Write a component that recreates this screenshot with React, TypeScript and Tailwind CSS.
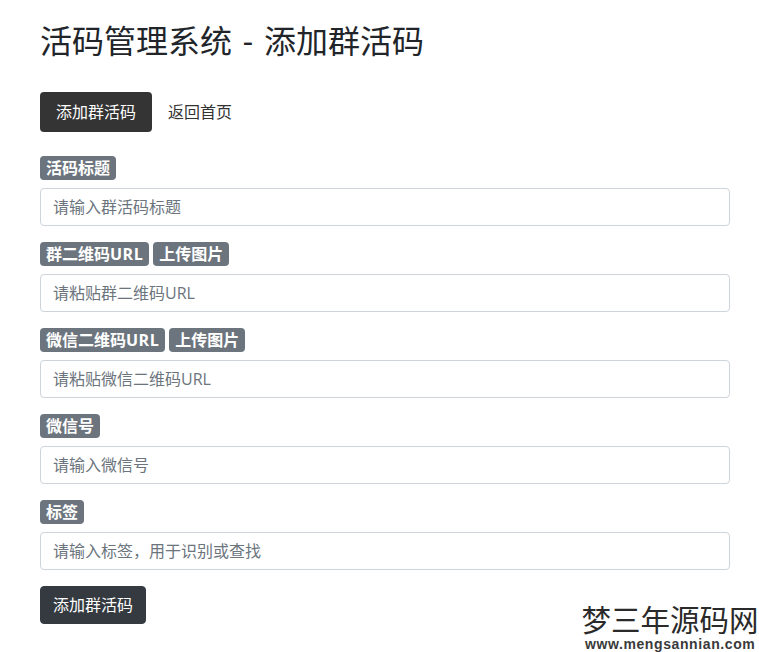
import React from 'react';

const fontStack = "font-['Open_Sans','Noto_Sans_CJK_SC',sans-serif]";

const Badge: React.FC<{ label: string }> = ({ label }) => (
  <span className="inline-block h-6 rounded bg-[#6c757d] px-1.5 text-base leading-6 font-bold text-white">
    {label.endsWith('URL') ? (
      <>
        {label.slice(0, -3)}
        <span className="tracking-[0.5px]">URL</span>
      </>
    ) : (
      label
    )}
  </span>
);

const Field: React.FC<{ labels: string[]; placeholder: string }> = ({ labels, placeholder }) => (
  <div className="mb-4">
    <div className="mb-2 flex gap-1">
      {labels.map((l) => (
        <Badge key={l} label={l} />
      ))}
    </div>
    <input
      type="text"
      placeholder={placeholder}
      className="block h-[38px] w-full rounded border border-[#ced4da] bg-white px-3 text-base text-[#495057] placeholder:text-[#6c757d]"
    />
  </div>
);

export default function App() {
  return (
    <div className={`relative h-[652px] w-[759px] overflow-hidden bg-white text-[#212529] ${fontStack}`}>
      <div className="w-[730px] pt-[22px] pl-10">
        <h2 className="mb-8 text-[32px] leading-[38px] font-normal text-[#212529] [word-spacing:2.5px]">活码管理系统 - 添加群活码</h2>

        <nav className="mb-6 flex">
          <a href="#" className="h-10 rounded bg-[#343434] px-4 text-base leading-10 text-white">添加群活码</a>
          <a href="#" className="h-10 px-4 text-base leading-10 text-[#333333]">返回首页</a>
        </nav>

        <Field labels={['活码标题']} placeholder="请输入群活码标题" />
        <Field labels={['群二维码URL', '上传图片']} placeholder="请粘贴群二维码URL" />
        <Field labels={['微信二维码URL', '上传图片']} placeholder="请粘贴微信二维码URL" />
        <Field labels={['微信号']} placeholder="请输入微信号" />
        <Field labels={['标签']} placeholder="请输入标签，用于识别或查找" />

        <button type="button" className="h-[38px] rounded border border-[#343a40] bg-[#343a40] px-3 text-base text-white">添加群活码</button>
      </div>

      {/* watermark */}
      <div className="absolute top-[603px] left-[581px] w-[178px]">
        <div className="text-center text-[29.5px] leading-[34px] whitespace-nowrap text-[#2a2a2a]">梦三年源码网</div>
        <div className="pl-1 font-['Liberation_Sans',sans-serif] text-[14px] leading-[15px] font-bold tracking-[0.6px] whitespace-nowrap text-[#3a3a3a]">www.mengsannian.com</div>
      </div>
    </div>
  );
}
